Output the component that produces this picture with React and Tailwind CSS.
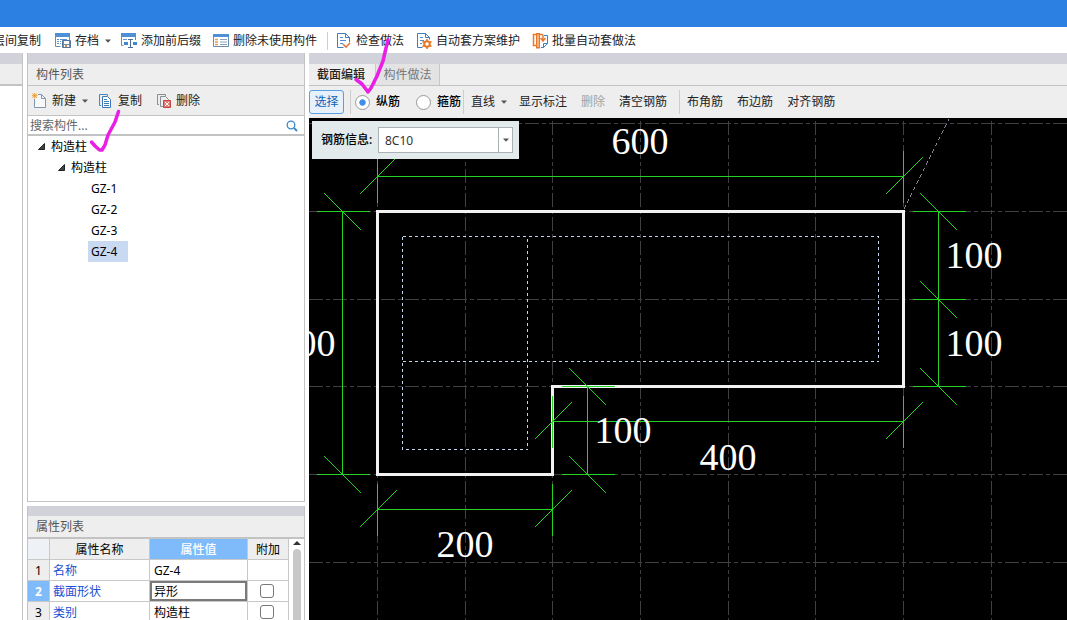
import React, { useState } from 'react';
import clsx from 'clsx';

const GRID_X = [68.5, 156.5, 243.5, 331.5, 419.5, 506.5, 594.5, 682.5];
const GRID_Y = [5.5, 93.5, 181.5, 268.5, 356.5, 444.5];

// dimension labels: [text, center x, baseline y]
const LABELS = [
    ['600', 331, 36],
    ['300', -2, 238],
    ['100', 665, 150],
    ['100', 665, 238],
    ['100', 314, 325],
    ['400', 419, 352],
    ['200', 156, 439],
];

const Arrow = () => (
    <svg className="h-1 w-1.5" viewBox="0 0 6 4">
        <path d="M0 0.5h6L3 3.7z" fill="#555" />
    </svg>
);

const Separator = ({ className }) => <div className={clsx('w-px shrink-0 bg-[#cdcdcd]', className)} />;

const SaveIcon = () => (
    <svg className="size-4" viewBox="0 0 16 16" fill="none">
        <path d="M0 0h15v4H0z" fill="#4f8fd6" />
        <path d="M0.5 4v9.5h5M14.5 4v3" stroke="#6a8cae" />
        <path d="M2 6.5h2M5 6.5h7M2 8.5h2M5 8.5h1M2 10.5h2M5 10.5h1" stroke="#5b93cf" />
        <path d="M7.5 7.5h8v7h-8z" fill="#6b8db0" stroke="#52779d" />
        <path d="M9 8h5v3H9z" fill="#fff" />
        <path d="M9 12h5v2H9z" fill="#fff" />
        <path d="M10 12h2v2h-2z" fill="#e78532" />
    </svg>
);

const AffixIcon = () => (
    <svg className="size-4" viewBox="0 0 16 16" fill="none">
        <path d="M0 0h15v4H0z" fill="#4f8fd6" />
        <path d="M0.5 4v8.5h2M14.5 4v3" stroke="#6a8cae" />
        <path d="M2 6.5h4" stroke="#5b93cf" />
        <path d="M7 6.5h5M9.5 6.5v8M7 14.5h5" stroke="#4a6f96" />
        <path d="M3 9h4v3H3zM12 9h4v3h-4z" fill="#3f86d4" />
    </svg>
);

const UnusedIcon = () => (
    <svg className="size-4" viewBox="0 0 16 16" fill="none">
        <path d="M0.5 1.5h15v12h-15z" fill="#fff" stroke="#6a8cae" />
        <path d="M0 1h16v3H0z" fill="#4f8fd6" />
        <path d="M2 6.5h3M2 9h3M2 11.5h3" stroke="#e9a04a" strokeWidth="1.5" />
        <path d="M7 6.5h7M7 9h7M7 11.5h7" stroke="#8aa4bf" />
    </svg>
);

const CheckIcon = () => (
    <svg className="size-4" viewBox="-1 0 16 16" fill="none">
        <path d="M6.5 14.5h-6v-14h8l4 4v5M8.5 0.5v4h4" stroke="#3f7fc0" />
        <path d="M3 4.5h3M3 7.5h6M3 10.5h3" stroke="#4f8fd6" />
        <path d="M6 11l3 3 4-4" stroke="#e4763a" strokeWidth="1.6" />
    </svg>
);

const GearDocIcon = () => (
    <svg className="size-4" viewBox="-1 0 16 16" fill="none">
        <path d="M5.5 14.5h-5v-14h8l4 4v2M8.5 0.5v4h4" stroke="#3f7fc0" />
        <path d="M3 4.5h3M3 7.5h4M3 10.5h2" stroke="#4f8fd6" />
        <circle cx="10" cy="11" r="2.8" stroke="#e8792b" strokeWidth="2" />
        <path d="M10 6v2M10 14v2M5.5 8.5l2 1M12.5 12.5l2 1M5.5 13.5l2-1M12.5 9.5l2-1" stroke="#e8792b" strokeWidth="1.6" />
    </svg>
);

const BatchIcon = () => (
    <svg className="size-4" viewBox="0 0 16 16" fill="none">
        <path d="M5 1.5H1.5v11H4" stroke="#e8792b" strokeWidth="1.5" />
        <path d="M12 2.5h3.5v8l-4 4H9M11.5 14.5v-4h4" stroke="#3f7fc0" />
        <path d="M4.7 0.8h2.6v14H4.7z" fill="#fbd9b8" stroke="#e8792b" strokeWidth="1.4" />
        <path d="M7 1.5h2.5q1.5 0 1.5 1.5v4M8.5 5l2.5 3 2.5-3" stroke="#e8792b" strokeWidth="1.5" />
    </svg>
);

const NewIcon = () => (
    <svg className="size-4" viewBox="0 0 16 16" fill="none">
        <path d="M2.5 6v8.5h11v-9l-4-4H6" fill="#f7f8fa" stroke="#8296ad" />
        <path d="M9.5 1.5v4h4" stroke="#8296ad" />
        <path d="M0.5 0.5l4.5 4.5M5 0.5L0.5 5M2.7 0v5.5M0 2.7h5.5" stroke="#f0a030" />
    </svg>
);

const CopyIcon = () => (
    <svg className="size-4" viewBox="0 0 16 16" fill="none">
        <path d="M3 12.500H1.500v-11h8V3" stroke="#4784c4" />
        <path d="M4.5 3.5h5l3 3v8h-8z" fill="#fff" stroke="#3b78bb" />
        <path d="M6 6.5h3M6 8.5h5M6 10.5h5M6 12.5h5" stroke="#3b78bb" />
    </svg>
);

const DeleteIcon = () => (
    <svg className="size-4" viewBox="0 0 16 16" fill="none">
        <path d="M3 11.5H1.5v-10h8V3" stroke="#8a8f96" />
        <path d="M7 13.5H4.5v-10h5l3 3V7" stroke="#8a8f96" />
        <path d="M7.5 7.5h7v7h-7z" fill="#e07b77" stroke="#c9443f" />
        <path d="M9 9l4 4M13 9l-4 4" stroke="#fff" />
    </svg>
);

const SearchIcon = () => (
    <svg className="size-3" viewBox="0 0 12 12" fill="none">
        <circle cx="5" cy="5" r="3.8" stroke="#3d87c8" strokeWidth="1.3" />
        <path d="M8 8l3 3" stroke="#3d87c8" strokeWidth="1.8" />
    </svg>
);

const ToolItem = ({ icon: Icon, label, arrow, className = 'mr-3.5' }) => (
    <button className={clsx('flex shrink-0 items-center gap-1', className)}>
        {Icon && <Icon />}
        <span>{label}</span>
        {arrow && <span className="ml-0.5"><Arrow /></span>}
    </button>
);

const TopToolbar = () => (
    <div className="flex h-[26px] items-center overflow-hidden bg-white pt-0.5 text-[#222]">
        <div className="-ml-[7px] flex items-center">
            <ToolItem label="层间复制" />
            <ToolItem icon={SaveIcon} label="存档" arrow className="mr-2.5" />
            <ToolItem icon={AffixIcon} label="添加前后缀" className="mr-3" />
            <ToolItem icon={UnusedIcon} label="删除未使用构件" className="mr-2.5" />
            <Separator className="mr-2 h-[18px]" />
            <ToolItem icon={CheckIcon} label="检查做法" className="mr-3" />
            <ToolItem icon={GearDocIcon} label="自动套方案维护" className="mr-3" />
            <ToolItem icon={BatchIcon} label="批量自动套做法" />
        </div>
    </div>
);

const TreeNode = ({ label, indent }) => (
    <div className={clsx('flex h-[21px] items-center gap-1.5', indent)}>
        <svg className="size-[7px]" viewBox="0 0 7 7">
            <path d="M6.5 0.5v6h-6z" fill="#444" stroke="#222" />
        </svg>
        <span>{label}</span>
    </div>
);

const ComponentList = () => {
    const [selected, setSelected] = useState('GZ-4');

    return (
        <section className="flex min-h-0 flex-1 flex-col border-x border-b border-[#c3c3c3] bg-white">
            <div className="h-[11px] shrink-0 bg-[#d2d3da]" />
            <h2 className="flex h-[22px] shrink-0 items-center border-b border-[#c3c3c3] bg-[#eee] px-2 text-[#555]">构件列表</h2>
            <div className="flex h-[30px] shrink-0 items-center border-b border-[#c3c3c3] bg-[#eee] pl-1 text-[#222]">
                <button className="flex items-center gap-1">
                    <NewIcon />
                    <span>新建</span>
                    <span className="ml-0.5"><Arrow /></span>
                </button>
                <button className="ml-2.5 flex items-center gap-1">
                    <CopyIcon />
                    <span>复制</span>
                </button>
                <button className="ml-3.5 flex items-center gap-1">
                    <DeleteIcon />
                    <span>删除</span>
                </button>
            </div>
            <label className="flex h-5 shrink-0 items-center border-b-2 border-[#c3c3c3] pl-0.5 pr-1.5 pt-0.5">
                <input
                    type="text"
                    aria-label="搜索构件"
                    placeholder="搜索构件..."
                    className="min-w-0 flex-1 outline-none placeholder:text-[#666]"
                />
                <SearchIcon />
            </label>
            <div>
                <TreeNode label="构造柱" indent="pl-2.5" />
                <TreeNode label="构造柱" indent="pl-[30px]" />
                {['GZ-1', 'GZ-2', 'GZ-3', 'GZ-4'].map((name) => (
                    <button
                        key={name}
                        onClick={() => setSelected(name)}
                        className={clsx('ml-[60px] flex h-[21px] w-10 items-center pl-[3px]', selected === name && 'bg-[#c9d9f1]')}
                    >
                        {name}
                    </button>
                ))}
            </div>
        </section>
    );
};

const PropertyRow = ({ no, name, value, check, active }) => (
    <tr className="h-[21px]">
        <td className={clsx('border-r border-b border-[#c8c8c8] pt-0.5 text-center', active ? 'bg-[#7fbbfa] font-bold text-white' : 'bg-[#eee]')}>{no}</td>
        <td className="border-r border-b border-[#c8c8c8] pt-0.5 pl-[3px] text-[#1a4fd0]">{name}</td>
        <td className="border-r border-b border-[#c8c8c8]">
            <input
                type="text"
                aria-label={name}
                defaultValue={value}
                className={clsx('block h-5 w-full pl-1 outline-none', active && 'ring-2 ring-inset ring-[#7a7a7a]')}
            />
        </td>
        <td className="border-r border-b border-[#c8c8c8]">
            {check && (
                <input
                    type="checkbox"
                    aria-label={name + ' 附加'}
                    className="ml-3 block size-3.5 appearance-none rounded-[3px] border border-[#777] bg-white checked:bg-[#7fbbfa]"
                />
            )}
        </td>
    </tr>
);

const PropertyList = () => (
    <section className="h-[114px] shrink-0 overflow-hidden border-x border-[#c3c3c3] bg-white">
        <div className="h-2.5 bg-[#d2d3da]" />
        <h2 className="flex h-[23px] items-center border-b-2 border-[#c3c3c3] bg-[#eee] px-2 text-[#555]">属性列表</h2>
        <div className="flex">
            <table className="w-[261px] table-fixed border-separate border-spacing-0">
                <thead>
                    <tr className="h-[21px]">
                        <th className="w-[22px] border-r border-b border-[#c8c8c8] bg-[#eef1f6]" />
                        <th className="w-[100px] border-r border-b border-[#c8c8c8] bg-[#eee] pt-0.5 font-normal">属性名称</th>
                        <th className="w-[98px] border-r border-b border-[#c8c8c8] bg-[#7fbbfa] pt-0.5 font-medium text-white">属性值</th>
                        <th className="border-r border-b border-[#c8c8c8] bg-[#eee] pt-0.5 font-normal">附加</th>
                    </tr>
                </thead>
                <tbody>
                    <PropertyRow no="1" name="名称" value="GZ-4" />
                    <PropertyRow no="2" name="截面形状" value="异形" check active />
                    <PropertyRow no="3" name="类别" value="构造柱" check />
                </tbody>
            </table>
            <div className="flex flex-1 flex-col items-center gap-1 pt-0.5">
                <svg className="h-1 w-2" viewBox="0 0 8 4">
                    <path d="M0 4h8L4 0z" fill="#333" />
                </svg>
                <div className="w-2 flex-1 rounded-t bg-[#c8c8c8]" />
            </div>
        </div>
    </section>
);

const Radio = ({ label, checked, onChange }) => (
    <label className="flex shrink-0 items-center gap-1.5 text-black">
        <input
            type="radio"
            name="bar"
            checked={checked}
            onChange={onChange}
            className="size-[15px] appearance-none rounded-full border border-[#999] bg-white checked:bg-radial checked:from-[#3f8fe8] checked:from-30% checked:to-white checked:to-40%"
        />
        <span className="font-medium">{label}</span>
    </label>
);

const SectionToolbar = () => {
    const [bar, setBar] = useState('纵筋');

    return (
        <div className="flex h-8 shrink-0 items-center overflow-hidden whitespace-nowrap bg-[#eee] text-[#222]">
            <button className="mr-1.5 h-6 w-[35px] shrink-0 rounded-[3px] border border-[#5a9fe2] bg-[#e6f1fc] text-[#1563b8]">选择</button>
            <Separator className="mr-1 h-6" />
            <Radio label="纵筋" checked={bar === '纵筋'} onChange={() => setBar('纵筋')} />
            <div className="w-4 shrink-0" />
            <Radio label="箍筋" checked={bar === '箍筋'} onChange={() => setBar('箍筋')} />
            <Separator className="ml-0.5 mr-[7px] h-6" />
            <button className="flex items-center gap-1.5">
                <span>直线</span>
                <Arrow />
            </button>
            <button className="ml-3">显示标注</button>
            <button className="ml-3.5 text-[#a3a3a3]" disabled>删除</button>
            <button className="ml-3.5">清空钢筋</button>
            <Separator className="ml-3 mr-[7px] h-6" />
            <button>布角筋</button>
            <button className="ml-3.5">布边筋</button>
            <button className="ml-3.5">对齐钢筋</button>
        </div>
    );
};

// "/" on horizontal dimensions, "\" (back) on vertical ones
const Slash = ({ x, y, back }) => (
    <path d={back ? `M${x - 18} ${y - 18}l37 37` : `M${x - 18} ${y + 18}l37 -37`} />
);

const HorizontalDim = ({ x1, x2, y }) => (
    <g>
        <path d={`M${x1} ${y}H${x2}M${x1} ${y - 26}v52M${x2} ${y - 26}v52`} />
        <Slash x={x1} y={y} />
        <Slash x={x2} y={y} />
    </g>
);

const VerticalDim = ({ x, y1, y2 }) => (
    <g>
        <path d={`M${x} ${y1}V${y2}M${x - 26} ${y1}h53M${x - 26} ${y2}h53`} />
        <Slash x={x} y={y1} back />
        <Slash x={x} y={y2} back />
    </g>
);

const SectionDrawing = () => (
    <svg className="block size-full" fill="none" shapeRendering="crispEdges">
        <g stroke="#404044" strokeDasharray="14 3 4 3">
            {GRID_X.map((x) => (
                <line key={x} x1={x} y1="3" x2={x} y2="2000" />
            ))}
            {GRID_Y.map((y) => (
                <line key={y} x1="0" y1={y} x2="3000" y2={y} />
            ))}
        </g>
        <path d="M595 91L640 1" stroke="#917f97" strokeDasharray="4 3" />
        <g stroke="#c3d3ea" strokeDasharray="3 3">
            <path d="M93.5 118.5H569.5V243.5H93.5" />
            <path d="M93.5 118.5V331.5H218.5V118.5" />
        </g>
        <path d="M68.5 93.5H594.5V268.5H243.5V356.5H68.5Z" stroke="#f2f2f2" strokeWidth="3" />
        <g stroke="#25d325">
            <HorizontalDim x1={68.5} x2={594.5} y={58.5} />
            <HorizontalDim x1={243.5} x2={594.5} y={303.5} />
            <HorizontalDim x1={68.5} x2={243.5} y={391.5} />
            <VerticalDim x={33.5} y1={93.5} y2={356.5} />
            <VerticalDim x={278.5} y1={268.5} y2={356.5} />
            <VerticalDim x={629.5} y1={93.5} y2={181.5} />
            <VerticalDim x={629.5} y1={181.5} y2={268.5} />
        </g>
        <g className="font-['Liberation_Serif',serif] text-[38px]" fill="#fff" textAnchor="middle">
            {LABELS.map(([text, x, y], i) => (
                <text key={i} x={x} y={y}>{text}</text>
            ))}
        </g>
    </svg>
);

const SectionEditor = () => (
    <section className="flex min-w-0 flex-1 flex-col">
        <div className="h-[11px] shrink-0 bg-[#d2d3da]" />
        <div className="flex h-[22px] shrink-0 border-b border-[#c3c3c3] bg-[#eee]">
            <button className="w-[66px] pl-2 text-left font-medium text-[#222]">截面编辑</button>
            <button className="w-[65px] border-x border-[#c8c8c8] bg-[#e3e3e3] text-[#777]">构件做法</button>
        </div>
        <SectionToolbar />
        <div className="relative min-h-0 flex-1 overflow-hidden bg-black">
            <SectionDrawing />
            <div className="absolute left-[3px] top-[3px] flex h-[38px] w-[207px] items-center bg-[#e2eaeb] pl-[9px] pr-1.5">
                <label htmlFor="rebar" className="w-[57px] shrink-0 font-medium">钢筋信息:</label>
                <div className="flex h-[26px] w-[135px] border border-[#a9b1b5] bg-white">
                    <input id="rebar" type="text" defaultValue="8C10" className="min-w-0 flex-1 pl-1.5 pt-0.5 text-[#333] outline-none" />
                    <button aria-label="展开" className="flex w-3.5 shrink-0 items-center justify-center border-l border-[#a9b1b5]">
                        <Arrow />
                    </button>
                </div>
            </div>
        </div>
    </section>
);

// hand-drawn marks over the page
const Marks = () => (
    <svg className="pointer-events-none absolute left-0 top-0 h-40 w-[400px]" fill="none" stroke="#ea1fe6" strokeWidth="3.5" strokeLinecap="round" strokeLinejoin="round">
        <path d="M118.5 111.5L115 122L108 135L105 145L102 150H99.5L95 146L91.5 142" />
        <path d="M388 40L386 48L383 61L377 76L371 88L368 92L362 84L356 79.5" />
    </svg>
);

export default function App() {
    return (
        <div className="relative flex h-screen flex-col overflow-hidden bg-white font-['Noto_Sans','Noto_Sans_CJK_SC',sans-serif] text-[12px] leading-4 text-black">
            <div className="h-[27px] shrink-0 bg-[#2b80e2]" />
            <TopToolbar />
            <main className="flex min-h-0 flex-1">
                <aside className="w-[23px] shrink-0 border-r border-[#c3c3c3]">
                    <div className="h-[11px] bg-[#d2d3da]" />
                    <div className="h-[22px] border-b-2 border-[#c3c3c3] bg-[#eee]" />
                </aside>
                <div className="ml-1 mr-1 flex w-[278px] shrink-0 flex-col gap-1">
                    <ComponentList />
                    <PropertyList />
                </div>
                <SectionEditor />
            </main>
            <Marks />
        </div>
    );
}
